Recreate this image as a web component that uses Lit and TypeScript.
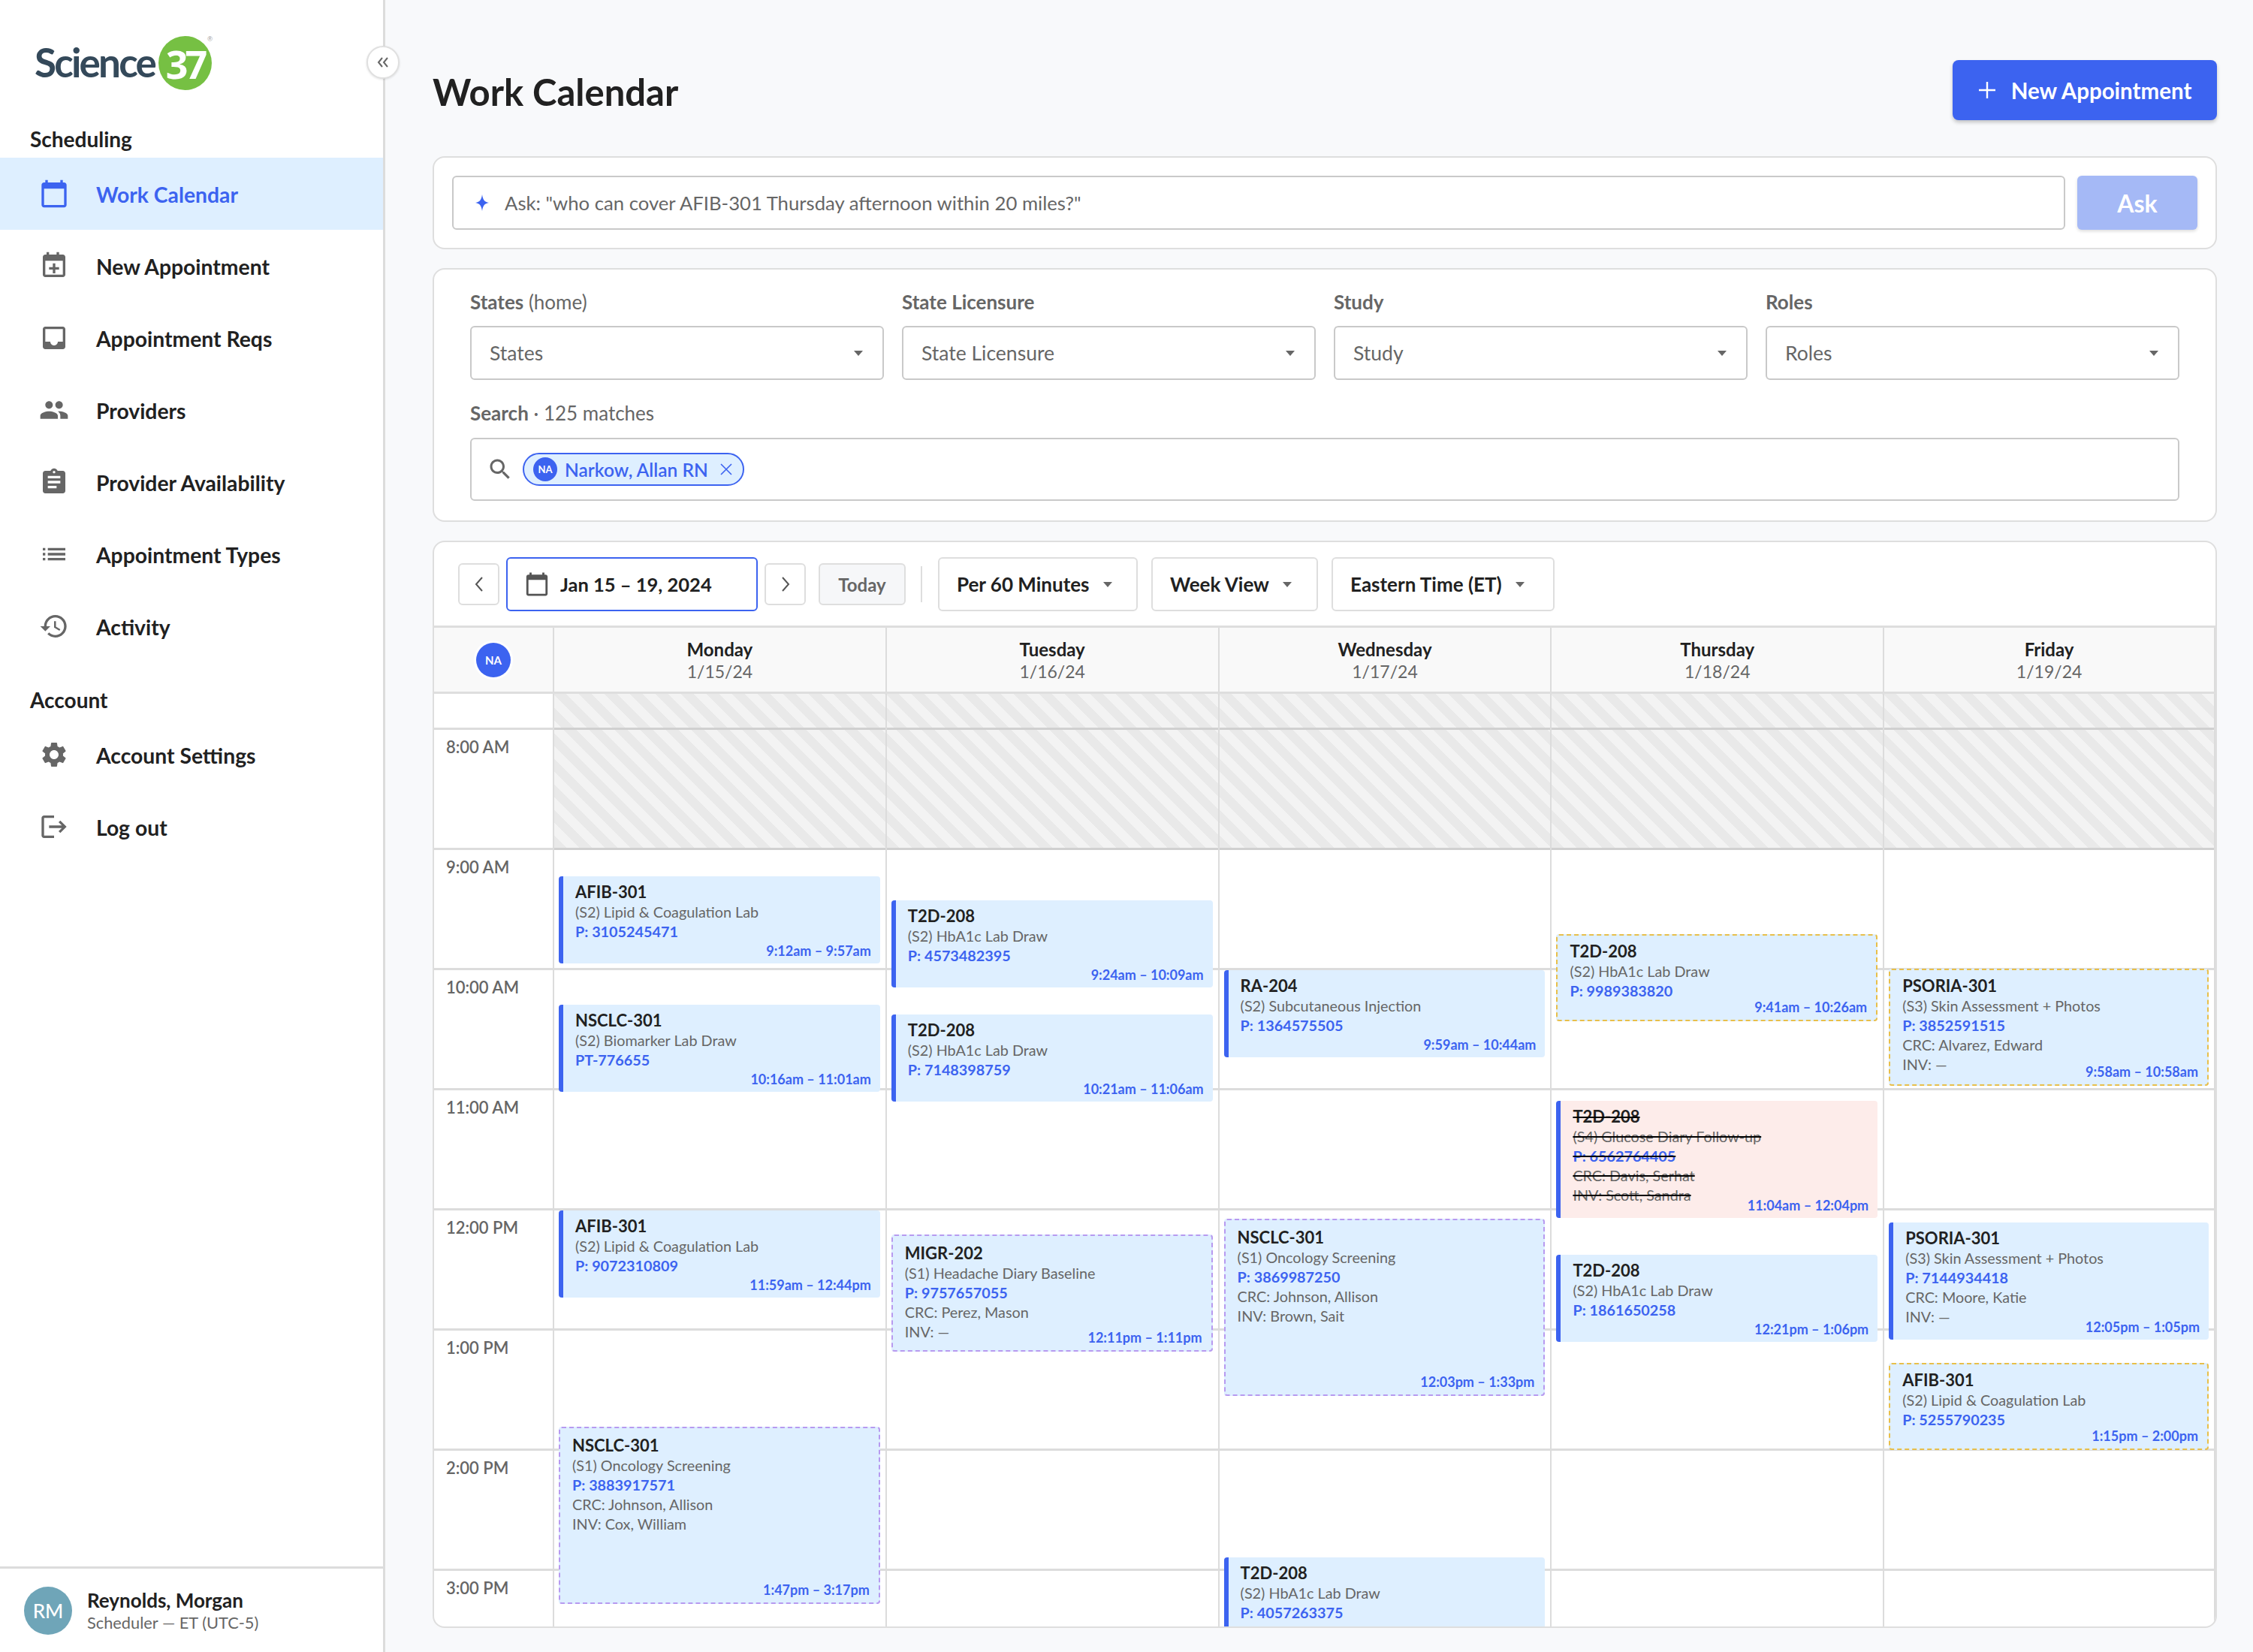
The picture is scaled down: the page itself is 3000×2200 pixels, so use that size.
import { LitElement, html, css, svg } from "lit";
import { customElement } from "lit/decorators.js";

type Ev = { code: string; sub: string; p: string; crc?: string; inv?: string; time?: string; start: number; mins: number; kind: "solid" | "purple" | "yellow" | "cancel" };

const days: { name: string; date: string; events: Ev[] }[] = [
  { name: "Monday", date: "1/15/24", events: [
    { code: "AFIB-301", sub: "(S2) Lipid & Coagulation Lab", p: "P: 3105245471", time: "9:12am – 9:57am", start: 12, mins: 45, kind: "solid" },
    { code: "NSCLC-301", sub: "(S2) Biomarker Lab Draw", p: "PT-776655", time: "10:16am – 11:01am", start: 76, mins: 45, kind: "solid" },
    { code: "AFIB-301", sub: "(S2) Lipid & Coagulation Lab", p: "P: 9072310809", time: "11:59am – 12:44pm", start: 179, mins: 45, kind: "solid" },
    { code: "NSCLC-301", sub: "(S1) Oncology Screening", p: "P: 3883917571", crc: "CRC: Johnson, Allison", inv: "INV: Cox, William", time: "1:47pm – 3:17pm", start: 287, mins: 90, kind: "purple" },
  ]},
  { name: "Tuesday", date: "1/16/24", events: [
    { code: "T2D-208", sub: "(S2) HbA1c Lab Draw", p: "P: 4573482395", time: "9:24am – 10:09am", start: 24, mins: 45, kind: "solid" },
    { code: "T2D-208", sub: "(S2) HbA1c Lab Draw", p: "P: 7148398759", time: "10:21am – 11:06am", start: 81, mins: 45, kind: "solid" },
    { code: "MIGR-202", sub: "(S1) Headache Diary Baseline", p: "P: 9757657055", crc: "CRC: Perez, Mason", inv: "INV: —", time: "12:11pm – 1:11pm", start: 191, mins: 60, kind: "purple" },
  ]},
  { name: "Wednesday", date: "1/17/24", events: [
    { code: "RA-204", sub: "(S2) Subcutaneous Injection", p: "P: 1364575505", time: "9:59am – 10:44am", start: 59, mins: 45, kind: "solid" },
    { code: "NSCLC-301", sub: "(S1) Oncology Screening", p: "P: 3869987250", crc: "CRC: Johnson, Allison", inv: "INV: Brown, Sait", time: "12:03pm – 1:33pm", start: 183, mins: 90, kind: "purple" },
    { code: "T2D-208", sub: "(S2) HbA1c Lab Draw", p: "P: 4057263375", start: 352, mins: 45, kind: "solid" },
  ]},
  { name: "Thursday", date: "1/18/24", events: [
    { code: "T2D-208", sub: "(S2) HbA1c Lab Draw", p: "P: 9989383820", time: "9:41am – 10:26am", start: 41, mins: 45, kind: "yellow" },
    { code: "T2D-208", sub: "(S4) Glucose Diary Follow-up", p: "P: 6562764405", crc: "CRC: Davis, Serhat", inv: "INV: Scott, Sandra", time: "11:04am – 12:04pm", start: 124, mins: 60, kind: "cancel" },
    { code: "T2D-208", sub: "(S2) HbA1c Lab Draw", p: "P: 1861650258", time: "12:21pm – 1:06pm", start: 201, mins: 45, kind: "solid" },
  ]},
  { name: "Friday", date: "1/19/24", events: [
    { code: "PSORIA-301", sub: "(S3) Skin Assessment + Photos", p: "P: 3852591515", crc: "CRC: Alvarez, Edward", inv: "INV: —", time: "9:58am – 10:58am", start: 58, mins: 60, kind: "yellow" },
    { code: "PSORIA-301", sub: "(S3) Skin Assessment + Photos", p: "P: 7144934418", crc: "CRC: Moore, Katie", inv: "INV: —", time: "12:05pm – 1:05pm", start: 185, mins: 60, kind: "solid" },
    { code: "AFIB-301", sub: "(S2) Lipid & Coagulation Lab", p: "P: 5255790235", time: "1:15pm – 2:00pm", start: 255, mins: 45, kind: "yellow" },
  ]},
];

const hours = ["8:00 AM", "9:00 AM", "10:00 AM", "11:00 AM", "12:00 PM", "1:00 PM", "2:00 PM", "3:00 PM"];

const ic = (d: unknown, size = 40) => html`<svg class="ic" width=${size} height=${size} viewBox="0 0 24 24" fill="currentColor">${d}</svg>`;
const icons = {
  cal: svg`<path d="M20 3h-1V1h-2v2H7V1H5v2H4c-1.1 0-2 .9-2 2v16c0 1.1.9 2 2 2h16c1.1 0 2-.9 2-2V5c0-1.1-.9-2-2-2zm0 18H4V8h16v13z"/>`,
  add: svg`<path d="M17 3h-1V1h-2v2H8V1H6v2H5c-1.1 0-2 .9-2 2v14c0 1.1.9 2 2 2h14c1.1 0 2-.9 2-2V5c0-1.1-.9-2-2-2h-2zm2 16H5V8h14v11zM11 10h2v3h3v2h-3v3h-2v-3H8v-2h3v-3z"/>`,
  inbox: svg`<path fill-rule="evenodd" d="M19 3H5c-1.1 0-2 .9-2 2v14c0 1.1.9 2 2 2h14c1.1 0 2-.9 2-2V5c0-1.1-.9-2-2-2zm0 12h-4c0 1.66-1.35 3-3 3s-3-1.34-3-3H5V5h14v10z"/>`,
  people: svg`<path d="M16 11c1.66 0 2.99-1.34 2.99-3S17.66 5 16 5s-3 1.34-3 3 1.34 3 3 3zm-8 0c1.66 0 2.99-1.34 2.99-3S9.66 5 8 5 5 6.34 5 8s1.34 3 3 3zm0 2c-2.33 0-7 1.17-7 3.5V19h14v-2.5C15 14.17 10.33 13 8 13zm8 0c-.29 0-.62.02-.97.05 1.16.84 1.97 1.97 1.97 3.45V19h6v-2.5c0-2.33-4.67-3.5-7-3.5z"/>`,
  clip: svg`<path d="M19 3h-4.18C14.4 1.84 13.3 1 12 1c-1.3 0-2.4.84-2.82 2H5c-1.1 0-2 .9-2 2v14c0 1.1.9 2 2 2h14c1.1 0 2-.9 2-2V5c0-1.1-.9-2-2-2zm-7 0c.55 0 1 .45 1 1s-.45 1-1 1-1-.45-1-1 .45-1 1-1zm2 14H7v-2h7v2zm3-4H7v-2h10v2zm0-4H7V7h10v2z"/>`,
  list: svg`<path d="M3 13h2v-2H3v2zm0 4h2v-2H3v2zm0-8h2V7H3v2zm4 4h14v-2H7v2zm0 4h14v-2H7v2zM7 7v2h14V7H7z"/>`,
  hist: svg`<path d="M13 3c-4.97 0-9 4.03-9 9H1l3.89 3.89.07.14L9 12H6c0-3.87 3.13-7 7-7s7 3.13 7 7-3.13 7-7 7c-1.93 0-3.68-.79-4.94-2.06l-1.42 1.42C8.27 19.99 10.51 21 13 21c4.97 0 9-4.03 9-9s-4.03-9-9-9zm-1 5v5l4.28 2.54.72-1.21-3.5-2.08V8H12z"/>`,
  gear: svg`<path d="M19.14 12.94c.04-.3.06-.61.06-.94s-.02-.64-.07-.94l2.03-1.58c.18-.14.23-.41.12-.61l-1.92-3.32c-.12-.22-.37-.29-.59-.22l-2.39.96c-.5-.38-1.03-.7-1.62-.94l-.36-2.54c-.04-.24-.24-.41-.48-.41h-3.84c-.24 0-.43.17-.47.41l-.36 2.54c-.59.24-1.13.57-1.62.94l-2.39-.96c-.22-.08-.47 0-.59.22L2.74 8.87c-.12.21-.08.47.12.61l2.03 1.58c-.05.3-.09.63-.09.94s.02.64.07.94l-2.03 1.58c-.18.14-.23.41-.12.61l1.92 3.32c.12.22.37.29.59.22l2.39-.96c.5.38 1.03.7 1.62.94l.36 2.54c.05.24.24.41.48.41h3.84c.24 0 .44-.17.47-.41l.36-2.54c.59-.24 1.13-.56 1.62-.94l2.39.96c.22.08.47 0 .59-.22l1.92-3.32c.12-.22.07-.47-.12-.61l-2.01-1.58zM12 15.6c-1.98 0-3.6-1.62-3.6-3.6s1.62-3.6 3.6-3.6 3.6 1.62 3.6 3.6-1.62 3.6-3.6 3.6z"/>`,
  logout: svg`<path d="M17 7l-1.41 1.41L18.17 11H8v2h10.17l-2.58 2.58L17 17l5-5-5-5zM4 5h8V3H4c-1.1 0-2 .9-2 2v14c0 1.1.9 2 2 2h8v-2H4V5z"/>`,
  search: svg`<path d="M15.5 14h-.79l-.28-.27C15.41 12.59 16 11.11 16 9.5 16 5.91 13.09 3 9.5 3S3 5.91 3 9.5 5.91 16 9.5 16c1.61 0 3.09-.59 4.23-1.57l.27.28v.79l5 4.99L20.49 19l-4.99-5zm-6 0C7.01 14 5 11.99 5 9.5S7.01 5 9.5 5 14 7.01 14 9.5 11.99 14 9.5 14z"/>`,
};

const caret = html`<span class="caret"></span>`;

@customElement("app-root")
export class AppRoot extends LitElement {
  static styles = css`
    :host { display: block; width: 3000px; height: 2200px; font-family: "Lato", "Liberation Sans", sans-serif; color: #212121; background: #f8f9fb; overflow: hidden; }
    * { box-sizing: border-box; }
    .app { display: flex; width: 3000px; height: 2200px; }
    .side { position: relative; width: 513px; flex: none; background: #fff; border-right: 3px solid #dcdcdc; display: flex; flex-direction: column; }
    .logo { height: 165px; padding: 48px 0 0 46px; display: flex; align-items: flex-start; }
    .logo-t { font-family: "Lato", sans-serif; font-size: 53px; line-height: 70px; font-weight: 700; color: #34495a; letter-spacing: -2.8px; width: 165px; white-space: nowrap; }
    .logo-c { position: relative; width: 71px; height: 72px; border-radius: 50%; background: #76c043; color: #fff; font-family: "Open Sans", sans-serif; font-weight: 700; font-size: 52px; letter-spacing: -4px; display: flex; align-items: center; justify-content: center; }
    .logo-r { position: absolute; right: -1px; top: 0; font-size: 9px; line-height: 9px; color: #9a9a9a; font-family: "Liberation Sans", sans-serif; font-weight: 400; letter-spacing: 0; }
    .collapse { position: absolute; left: 488px; top: 61px; width: 44px; height: 44px; border-radius: 50%; background: #fff; border: 2px solid #e0e0e0; box-shadow: 0 1px 3px rgba(0,0,0,.12); display: flex; align-items: center; justify-content: center; color: #666; }
    .sec { font-size: 28px; font-weight: 700; line-height: 40px; padding-left: 40px; color: #212121; margin-bottom: 5px; }
    .sec.a { margin-top: 30px; }
    .nav { height: 96px; display: flex; align-items: center; padding-left: 52px; font-size: 28.3px; font-weight: 700; color: #212121; gap: 36px; }
    .nav span { padding-top: 2px; }
    .nav .ic { color: #666; flex: none; }
    .nav.on { background: #deefff; color: #3c63f0; margin-right: 0; }
    .nav.on .ic { color: #3c63f0; }
    .user { margin-top: auto; height: 114px; border-top: 3px solid #dcdcdc; display: flex; align-items: center; padding-left: 32px; gap: 20px; }
    .ua { width: 64px; height: 64px; border-radius: 50%; background: #6fa5b8; color: #fff; font-size: 26px; font-weight: 500; display: flex; align-items: center; justify-content: center; }
    .un { font-size: 26px; font-weight: 700; line-height: 32px; }
    .ur { font-size: 21.8px; color: #666; line-height: 28px; }

    .main { flex: 1; min-width: 0; padding: 80px 48px 0 63px; display: flex; flex-direction: column; }
    .top { display: flex; justify-content: space-between; align-items: center; height: 80px; margin-bottom: 48px; }
    h1 { margin: 0; padding-top: 3px; font-size: 49px; font-weight: 700; color: #212121; line-height: 84px; }
    .new { width: 352px; height: 80px; border: 0; border-radius: 8px; background: #3c63f0; color: #fff; font: 700 29.5px "Lato", sans-serif; display: flex; align-items: center; justify-content: center; gap: 20px; box-shadow: 0 3px 5px rgba(0,0,0,.22); }
    .panel { background: #fff; border: 2px solid #dedede; border-radius: 16px; }
    .ask { height: 124px; padding: 24px; display: flex; gap: 16px; margin-bottom: 25px; }
    .ask-in { flex: 1; display: flex; align-items: center; gap: 20px; padding: 0 28px; border: 2px solid #c9c9c9; border-radius: 6px; height: 72px; font-size: 25.7px; color: #666; }
    .ask-b { width: 160px; height: 72px; border-radius: 6px; background: #a5b9f6; color: #fff; font-size: 32px; font-weight: 700; display: flex; align-items: center; justify-content: center; box-shadow: 0 2px 4px rgba(0,0,0,.14); }
    .filters { height: 338px; padding: 27px 48px 0; margin-bottom: 25px; }
    .grid4 { display: grid; grid-template-columns: repeat(4, 1fr); gap: 24px; }
    .lb { font-size: 26px; color: #666; font-weight: 400; line-height: 32px; margin-bottom: 16px; }
    .lb b { font-weight: 700; }
    .sel { height: 72px; border: 2px solid #c9c9c9; border-radius: 6px; padding: 0 24px; display: flex; align-items: center; justify-content: space-between; font-size: 26.5px; color: #666; }
    .caret { width: 0; height: 0; border-left: 6.5px solid transparent; border-right: 6.5px solid transparent; border-top: 7px solid #666; flex: none; }
    .sel .caret { margin-right: 2px; }
    .sl2 { margin-top: 28px; margin-bottom: 17px; }
    .sbox { height: 84px; border: 2px solid #c9c9c9; border-radius: 6px; display: flex; align-items: center; padding-left: 20px; gap: 12px; color: #666; }
    .chip { width: 295px; height: 44px; border: 2px solid #3c63f0; border-radius: 22px; background: #deefff; display: flex; align-items: center; padding: 0 13px 0 12px; gap: 10px; color: #3c63f0; font-size: 24.5px; font-weight: 600; }
    .chip svg { margin-left: auto; }
    .cav { width: 32px; height: 32px; border-radius: 50%; background: #3c63f0; color: #fff; font-size: 13px; font-weight: 700; display: flex; align-items: center; justify-content: center; }
    .cal { flex: none; height: 1448px; overflow: hidden; display: flex; flex-direction: column; }
    .tb { height: 111px; flex: none; padding: 20px 0 0 32px; display: flex; align-items: flex-start; }
    .bt { display: flex; align-items: center; justify-content: center; background: #fff; border: 2px solid #dedede; border-radius: 6px; font-size: 26px; font-weight: 700; color: #212121; }
    .sq { width: 55px; height: 56px; margin-top: 8px; color: #555; }
    .date { width: 335px; height: 72px; border: 2px solid #3c63f0; margin: 0 9px; justify-content: flex-start; padding-left: 22px; gap: 14px; font-size: 25.5px; }
    .date .ic { color: #555; }
    .today { width: 116px; height: 56px; margin: 8px 0 0 17px; background: #f6f7f9; color: #666; font-size: 24px; }
    .dv { width: 2px; height: 48px; background: #dedede; margin: 12px 21px 0 20px; }
    .dd { height: 72px; gap: 18px; margin-right: 18px; justify-content: flex-start; padding-left: 23px; }
    .head { height: 91px; flex: none; display: grid; grid-template-columns: 158px repeat(5, 1fr); border-top: 3px solid #dedede; border-bottom: 3px solid #dedede; background: #f9f9f9; }
    .hc { border-left: 2px solid #dcdcdc; display: flex; flex-direction: column; align-items: center; justify-content: center; }
    .hc:first-child { border-left: 0; }
    .hc:last-child { border-right: 2px solid #dcdcdc; }
    .hd { font-size: 24px; font-weight: 700; line-height: 30px; }
    .ht { font-size: 23px; color: #666; line-height: 28px; }
    .na { width: 46px; height: 46px; border-radius: 50%; background: #3c63f0; color: #fff; font-size: 15px; font-weight: 700; display: flex; align-items: center; justify-content: center; box-shadow: 0 0 0 3px #fff; }
    .body { position: relative; flex: 1; display: grid; grid-template-columns: 158px repeat(5, 1fr); overflow: hidden; }
    .tcol { display: flex; flex-direction: column; }
    .tcol .pre { height: 48px; border-bottom: 3px solid #dcdcdc; flex: none; }
    .tcell { height: 160px; flex: none; border-bottom: 3px solid #dcdcdc; padding: 8px 0 0 16px; font-size: 22px; color: #666; font-weight: 600; line-height: 30px; }
    .dcol { position: relative; border-left: 2px solid #dcdcdc; overflow: hidden; }
    .dcol:last-child { border-right: 2px solid #dcdcdc; }
    .hatch { height: 208px; background: repeating-linear-gradient(45deg, #e9e9e9 0 12px, #f3f3f3 12px 24px); border-bottom: 3px solid #d0d0d0; position: relative; }
    .hatch::after { content: ""; position: absolute; left: 0; right: 0; top: 45px; height: 3px; background: #d0d0d0; }
    .rowl { height: 160px; border-bottom: 3px solid #dcdcdc; }
    .ev { position: absolute; left: 6px; right: 7px; background: #deefff; border-radius: 4px; padding: 8px 12px 0 16px; font-size: 19.8px; line-height: 26px; color: #666; overflow: hidden; }
    .ev.solid { border-left: 6px solid #3c63f0; }
    .ev.cancel { border-left: 6px solid #3c63f0; background: #fdecea; }
    .ev.purple { border: 2px dashed #b79af0; padding-top: 10px; }
    .ev.yellow { border: 2px dashed #e8bf4a; }
    .ev .c { font-size: 22px; font-weight: 700; color: #212121; line-height: 26px; }
    .ev .p { color: #3c63f0; font-weight: 700; }
    .ev .t { position: absolute; right: 12px; bottom: 4px; color: #3c63f0; font-weight: 700; font-size: 18px; }
    .ev.cancel .x { text-decoration: line-through; text-decoration-color: #000; text-decoration-thickness: 2px; }
  `;

  private event(e: Ev) {
    const top = 207 + (e.start * 8) / 3 + 4;
    const height = (e.mins * 8) / 3 - 4;
    return html`<div class="ev ${e.kind}" style="top:${top}px;height:${height}px">
      <div class="c x">${e.code}</div>
      <div class="x">${e.sub}</div>
      <div class="p x">${e.p}</div>
      ${e.crc ? html`<div class="x">${e.crc}</div>` : ""}
      ${e.inv ? html`<div class="x">${e.inv}</div>` : ""}
      ${e.time ? html`<div class="t">${e.time}</div>` : ""}
    </div>`;
  }

  render() {
    const nav = (i: unknown, t: string, on = false) => html`<div class="nav ${on ? "on" : ""}">${ic(i)}<span>${t}</span></div>`;
    return html`<div class="app">
      <aside class="side">
        <div class="logo"><span class="logo-t">Science</span><span class="logo-c">37<span class="logo-r">®</span></span></div>
        <div class="collapse"><svg width="20" height="20" viewBox="0 0 20 20" fill="none" stroke="currentColor" stroke-width="2"><path d="M9 4L4 10l5 6M16 4l-5 6 5 6"/></svg></div>
        <div class="sec">Scheduling</div>
        ${nav(icons.cal, "Work Calendar", true)}
        ${nav(icons.add, "New Appointment")}
        ${nav(icons.inbox, "Appointment Reqs")}
        ${nav(icons.people, "Providers")}
        ${nav(icons.clip, "Provider Availability")}
        ${nav(icons.list, "Appointment Types")}
        ${nav(icons.hist, "Activity")}
        <div class="sec a">Account</div>
        ${nav(icons.gear, "Account Settings")}
        ${nav(icons.logout, "Log out")}
        <div class="user"><div class="ua">RM</div><div><div class="un">Reynolds, Morgan</div><div class="ur">Scheduler — ET (UTC-5)</div></div></div>
      </aside>
      <main class="main">
        <div class="top"><h1>Work Calendar</h1>
          <div class="new"><svg width="24" height="24" viewBox="0 0 24 24" stroke="#fff" stroke-width="2.4"><path d="M12 1v22M1 12h22"/></svg>New Appointment</div></div>
        <div class="panel ask">
          <div class="ask-in"><svg width="20" height="24" viewBox="0 0 20 24" fill="#3c63f0"><path d="M10 1c1 7 3 10 9 11-6 1-8 4-9 11-1-7-3-10-9-11 6-1 8-4 9-11z"/></svg><span>Ask: "who can cover AFIB-301 Thursday afternoon within 20 miles?"</span></div>
          <div class="ask-b">Ask</div>
        </div>
        <div class="panel filters">
          <div class="grid4">
            ${[["States", " (home)", "States"], ["State Licensure", "", "State Licensure"], ["Study", "", "Study"], ["Roles", "", "Roles"]].map(([a, b, c]) => html`<div><div class="lb"><b>${a}</b>${b}</div><div class="sel"><span>${c}</span>${caret}</div></div>`)}
          </div>
          <div class="lb sl2"><b>Search</b> · 125 matches</div>
          <div class="sbox">${ic(icons.search, 36)}<div class="chip"><span class="cav">NA</span><span>Narkow, Allan RN</span><svg width="18" height="18" viewBox="0 0 18 18" stroke="currentColor" stroke-width="1.6"><path d="M2 2l14 14M16 2L2 16"/></svg></div></div>
        </div>
        <div class="panel cal">
          <div class="tb">
            <div class="bt sq"><svg width="14" height="24" viewBox="0 0 14 24" fill="none" stroke="currentColor" stroke-width="2"><path d="M11 3L3 12l8 9"/></svg></div>
            <div class="bt date">${ic(icons.cal, 34)}<span>Jan 15 – 19, 2024</span></div>
            <div class="bt sq"><svg width="14" height="24" viewBox="0 0 14 24" fill="none" stroke="currentColor" stroke-width="2"><path d="M3 3l8 9-8 9"/></svg></div>
            <div class="bt today">Today</div>
            <div class="dv"></div>
            <div class="bt dd" style="width:266px"><span>Per 60 Minutes</span>${caret}</div>
            <div class="bt dd" style="width:222px"><span>Week View</span>${caret}</div>
            <div class="bt dd" style="width:297px"><span>Eastern Time (ET)</span>${caret}</div>
          </div>
          <div class="head">
            <div class="hc"><div class="na">NA</div></div>
            ${days.map((d) => html`<div class="hc"><div class="hd">${d.name}</div><div class="ht">${d.date}</div></div>`)}
          </div>
          <div class="body">
            <div class="tcol"><div class="pre"></div>${hours.map((h) => html`<div class="tcell">${h}</div>`)}</div>
            ${days.map((d) => html`<div class="dcol"><div class="hatch"></div>${hours.slice(1).map(() => html`<div class="rowl"></div>`)}${d.events.map((e) => this.event(e))}</div>`)}
          </div>
        </div>
      </main>
    </div>`;
  }
}
